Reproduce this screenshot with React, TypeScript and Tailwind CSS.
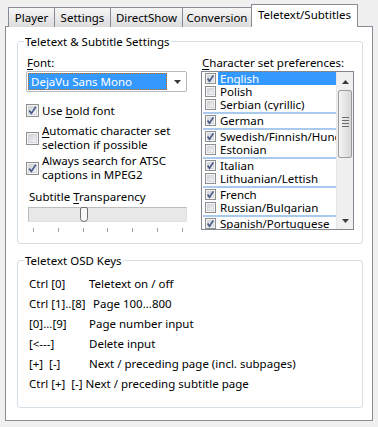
import React from "react";

const tabs = [
    { label: "Player", w: "w-[47px]" },
    { label: "Settings", w: "w-[57px]" },
    { label: "DirectShow", w: "w-[73px]" },
    { label: "Conversion", w: "w-[70px]" },
];

const charsets = [
    { name: "English", on: true, sel: true },
    { name: "Polish" },
    { name: "Serbian (cyrillic)", sep: true },
    { name: "German", on: true, sep: true },
    { name: "Swedish/Finnish/Hungarian", on: true },
    { name: "Estonian", sep: true },
    { name: "Italian", on: true },
    { name: "Lithuanian/Lettish", sep: true },
    { name: "French", on: true },
    { name: "Russian/Bulgarian", sep: true },
    { name: "Spanish/Portuguese", on: true },
];

const osdKeys = [
    { key: "Ctrl [0]", desc: "Teletext on / off" },
    { key: "Ctrl [1]..[8]", desc: "Page 100...800", shift: true },
    { key: "[0]...[9]", desc: "Page number input" },
    { key: "[<---]", desc: "Delete input" },
    { key: "[+]  [-]", desc: "Next / preceding page (incl. subpages)" },
];

function CheckBox({ checked, size = 13 }: { checked?: boolean; size?: number }) {
    const s = size;
    return (
        <svg width={s} height={s} viewBox={`0 0 ${s} ${s}`} className="shrink-0">
            <defs>
                <linearGradient id={`cb${s}`} x1="0" y1="0" x2="1" y2="1">
                    <stop offset="0" stopColor="#cbcfd5" />
                    <stop offset="1" stopColor="#f7f7f7" />
                </linearGradient>
            </defs>
            <rect x="0.5" y="0.5" width={s - 1} height={s - 1} fill="#f4f4f4" stroke="#8e8f8f" />
            <rect x="2.5" y="2.5" width={s - 5} height={s - 5} fill={`url(#cb${s})`} stroke="#d6d8db" />
            {checked && (
                <path
                    d={s === 13 ? "M3.2 6.6 L5.4 9.4 L9.8 2.8" : "M2.6 5.6 L4.5 8.2 L8.4 2.4"}
                    fill="none"
                    stroke="#4a5b88"
                    strokeWidth="1.7"
                />
            )}
        </svg>
    );
}

function Triangle({ down }: { down?: boolean }) {
    return (
        <svg width="7" height="4" viewBox="0 0 7 4">
            <path d={down ? "M0 0 H7 L3.5 4 Z" : "M0 4 H7 L3.5 0 Z"} fill="#3c3c3c" />
        </svg>
    );
}

export default function App() {
    return (
        <div
            className="w-[378px] h-[427px] bg-[#f0f0f0] text-[11.5px] text-black overflow-hidden"
            style={{ fontFamily: '"Noto Sans", "Open Sans", sans-serif' }}
        >
            {/* tab strip */}
            <div className="flex items-end h-[27px] pt-[4px] pl-[8px]">
                {tabs.map((t, i) => (
                    <div
                        key={t.label}
                        className={`${t.w} ${i > 0 ? "-ml-px" : ""} h-[20px] flex items-center justify-center border border-b-0 border-[#898c95] bg-linear-to-b from-[#f6f6f6] to-[#dcdcdc] leading-none`}
                    >
                        {t.label}
                    </div>
                ))}
                <div className="relative z-10 -ml-px w-[107px] h-[23px] flex items-center justify-center border border-b-0 border-[#898c95] bg-white pb-[2px] leading-none">
                    Teletext/Subtitles
                </div>
            </div>

            {/* page */}
            <div className="mx-[5px] -mt-px w-[368px] h-[395px] border border-[#898c95] bg-white">
                <fieldset className="ml-[11px] mt-[7px] w-[346px] h-[210px] border border-[#d5dfe5] rounded-[3px]">
                    <legend className="ml-[6px] px-px leading-[15px]">Teletext &amp; Subtitle Settings</legend>
                    <div className="flex pl-[8px] pt-[6px]">
                        {/* left column */}
                        <div className="w-[161px]">
                            <div className="pl-px leading-[15px] h-[15px]">
                                <span className="underline underline-offset-2">F</span>ont:
                            </div>
                            <div className="mt-px h-[21px] flex items-center border border-[#b5b7bc] rounded-[2px] bg-white pl-px pr-[5px]">
                                <div className="w-[139px] h-[17px] flex items-center bg-[#3399ff] text-white border border-dotted border-[#cc6600] pl-[2px] leading-none">
                                    DejaVu Sans Mono
                                </div>
                                <div className="ml-auto flex items-center">
                                    <Triangle down />
                                </div>
                            </div>

                            <div className="mt-[11px] h-[15px] flex items-center gap-[3px]">
                                <CheckBox checked />
                                <span className="leading-[15px]">
                                    Use <span className="underline underline-offset-2">b</span>old font
                                </span>
                            </div>

                            <div className="mt-[6px] flex items-center gap-[3px]">
                                <CheckBox />
                                <span className="leading-[14px]">
                                    <span className="underline underline-offset-2">A</span>utomatic character set
                                    <br />
                                    selection if possible
                                </span>
                            </div>

                            <div className="mt-[2px] flex items-center gap-[3px]">
                                <CheckBox checked />
                                <span className="leading-[14px]">
                                    Always search for ATSC
                                    <br />
                                    captions in MPEG2
                                </span>
                            </div>

                            <div className="mt-[7px] pl-[3px] leading-[15px] h-[15px]">
                                Subtitle <span className="underline underline-offset-2">T</span>ransparency
                            </div>

                            <div className="relative mt-[3px] ml-[2px] w-[159px] h-[15px] bg-[#e8e8e8] border border-[#bdbdbd] border-b-[#e2e2e2] border-r-[#e2e2e2]">
                                <svg width="8" height="15" viewBox="0 0 8 15" className="absolute left-[51px] -top-px">
                                    <path
                                        d="M0.5 2 Q0.5 0.5 2 0.5 H6 Q7.5 0.5 7.5 2 V11.5 Q7.5 14.5 4 14.5 Q0.5 14.5 0.5 11.5 Z"
                                        fill="#f7f7f7"
                                        stroke="#707070"
                                    />
                                </svg>
                            </div>
                            <div className="mt-[6px] ml-[7px] w-[150px] h-[4px] flex justify-between">
                                {[0, 1, 2, 3, 4, 5, 6].map((n) => (
                                    <div key={n} className="w-px h-[4px] bg-[#a0a0a0]" />
                                ))}
                            </div>
                        </div>

                        {/* right column */}
                        <div className="ml-[14px] w-[153px]">
                            <div className="pl-px leading-[15px] h-[15px]">
                                <span className="underline underline-offset-2">C</span>haracter set preferences:
                            </div>
                            <div className="mt-px h-[159px] flex border border-[#828790] bg-white">
                                <div className="w-[134px] overflow-hidden">
                                    {charsets.map((c) => (
                                        <React.Fragment key={c.name}>
                                            <div className="h-[13px] flex items-center">
                                                <div className="ml-[3px] mr-[2px] flex">
                                                    <CheckBox checked={c.on} size={11} />
                                                </div>
                                                <div
                                                    className={`flex-1 h-[13px] pl-[2px] leading-[13px] whitespace-nowrap overflow-hidden ${c.sel ? "bg-[#3399ff] text-white" : ""}`}
                                                >
                                                    {c.name}
                                                </div>
                                            </div>
                                            {c.sep && (
                                                <div className="h-[3px] pt-px pl-px">
                                                    <div className="h-[2px] bg-[#a9c9ee]" />
                                                </div>
                                            )}
                                        </React.Fragment>
                                    ))}
                                </div>
                                {/* scrollbar */}
                                <div className="w-[17px] flex flex-col bg-[#f0f0f0] border-l border-[#e6e6e6]">
                                    <div className="h-[17px] flex items-center justify-center pt-[2px]">
                                        <Triangle />
                                    </div>
                                    <div className="mt-px mx-px h-[68px] rounded-[2px] border border-[#9b9b9b] bg-linear-to-r from-[#f5f5f5] to-[#d6d6d6] flex flex-col items-center justify-center gap-[2px] pb-[4px]">
                                        {[0, 1, 2, 3].map((n) => (
                                            <div key={n} className="w-[7px] h-px bg-[#6c6c6c]" />
                                        ))}
                                    </div>
                                    <div className="flex-1" />
                                    <div className="h-[17px] flex items-center justify-center">
                                        <Triangle down />
                                    </div>
                                </div>
                            </div>
                        </div>
                    </div>
                </fieldset>

                <fieldset className="ml-[11px] mt-[9px] w-[346px] h-[155px] border border-[#d5dfe5] rounded-[3px]">
                    <legend className="ml-[6px] px-px leading-[15px]">Teletext OSD Keys</legend>
                    <div className="pt-[6px] pl-[11px]">
                        {osdKeys.map((k) => (
                            <div key={k.key} className="flex h-[20px] leading-[20px]">
                                <div className="w-[60px] whitespace-pre">{k.key}</div>
                                <div className={k.shift ? "pl-[4px]" : ""}>{k.desc}</div>
                            </div>
                        ))}
                        <div className="h-[20px] leading-[20px] whitespace-pre">Ctrl [+]  [-] Next / preceding subtitle page</div>
                    </div>
                </fieldset>
            </div>
        </div>
    );
}
